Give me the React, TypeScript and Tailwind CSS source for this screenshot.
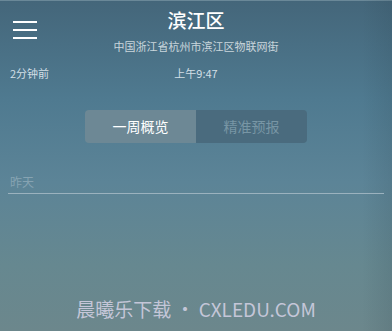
export default function App() {
  return (
    <div
      className="relative w-[392px] h-[331px] overflow-hidden bg-[linear-gradient(180deg,#44667a_0%,#4f7a90_30%,#5c8497_55%,#668890_80%,#6c878c_100%)]"
      style={{ fontFamily: '"Noto Sans CJK SC", "Noto Sans", sans-serif' }}
    >
      <div className="absolute inset-y-0 right-0 w-[30px] bg-[linear-gradient(90deg,rgba(0,0,0,0),rgba(30,50,60,0.12))]" />
      <div className="h-px bg-[#6a8898]" />
      <div className="relative flex flex-col">
        <div className="relative h-[62px]">
          <div className="absolute left-[13px] top-[20px] flex flex-col gap-[6px]">
            <div className="w-[24px] h-[2px] bg-white" />
            <div className="w-[24px] h-[2px] bg-white" />
            <div className="w-[24px] h-[2px] bg-white" />
          </div>
          <div className="flex flex-col items-center pt-[6px]">
            <div className="text-[19px] leading-[26px] font-medium text-white">滨江区</div>
            <div className="mt-[6px] text-[11px] leading-[14px] text-[#cad6dc]">中国浙江省杭州市滨江区物联网街</div>
          </div>
        </div>
        <div className="relative h-[16px] mt-[2px]">
          <div className="absolute left-[10px] top-0 text-[11px] leading-[16px] text-[#d2dfe6]">2分钟前</div>
          <div className="text-center text-[11px] leading-[16px] text-[#d2dfe6]">上午9:47</div>
        </div>
        <div className="flex justify-center mt-[29px]">
          <div className="flex w-[222px] h-[33px] rounded-[4px] overflow-hidden">
            <div className="flex-1 flex items-center justify-center bg-[#6d8895] text-[14px] text-white">一周概览</div>
            <div className="flex-1 flex items-center justify-center bg-[#4a6b7e] text-[14px] text-[#7896a5]">精准预报</div>
          </div>
        </div>
        <div className="mx-[8px] mt-[30px]">
          <div className="pl-[2px] text-[12px] leading-[18px] text-[#86a3b2]">昨天</div>
          <div className="mt-[2px] h-px bg-[#9bb2be]" />
        </div>
      </div>
      <div className="absolute left-0 right-0 top-[296px] text-center text-[19px] leading-[26px] text-[#c4c6d8]">
        晨曦乐下载 • CXLEDU.COM
      </div>
    </div>
  );
}
